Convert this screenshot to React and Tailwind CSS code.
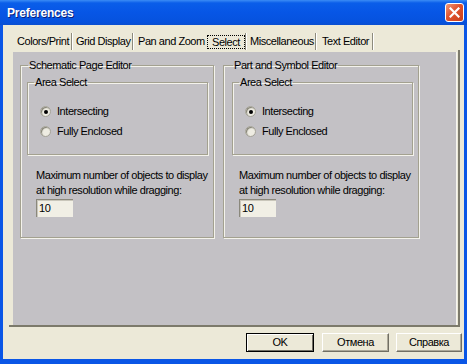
import React from "react";

function Radio({ checked }) {
  return (
    <span className="w-[11px] h-[11px] rounded-full bg-[#eeece2] border border-[#a4a297] shadow-[inset_1px_1px_1px_#7f7d70] flex items-center justify-center shrink-0">
      {checked && <span className="w-[4px] h-[4px] rounded-full bg-black" />}
    </span>
  );
}

function Btn({ children, def, className }) {
  return (
    <div
      className={
        "h-[19px] flex items-center justify-center bg-[#ece9d8] text-black " +
        (def
          ? "border border-black shadow-[inset_1px_1px_0_#fff,inset_-1px_-1px_0_#716f64]"
          : "border-t border-l border-t-white border-l-white border-r border-b border-r-[#716f64] border-b-[#716f64] shadow-[inset_-1px_-1px_0_#aca899]") +
        " " +
        className
      }
    >
      {children}
    </div>
  );
}

function Group({ title, titleMl, children, className }) {
  return (
    <fieldset
      className={
        "border border-[#a3a190] shadow-[1px_1px_0_#f4f3ec,inset_1px_1px_0_#f4f3ec] " +
        className
      }
    >
      <legend className={"px-[1px] leading-[13px] " + titleMl}>{title}</legend>
      {children}
    </fieldset>
  );
}

function EditorGroup({ title, titleMl, innerMl, className }) {
  return (
    <Group title={title} titleMl={titleMl} className={"h-[179px] " + className}>
      <div className={"mt-[4px] mr-[5px] " + innerMl}>
        <Group title="Area Select" titleMl="ml-[6px]" className="h-[79px]">
          <div className="pl-[12px] pt-[17px] flex flex-col gap-[9px]">
            <div className="flex items-center h-[11px]">
              <Radio checked />
              <span className="ml-[6px] leading-[13px]">Intersecting</span>
            </div>
            <div className="flex items-center h-[11px]">
              <Radio />
              <span className="ml-[6px] leading-[13px]">Fully Enclosed</span>
            </div>
          </div>
        </Group>
      </div>
      <div className="pl-[15px] mt-[13px] leading-[15px]">
        <div>Maximum number of objects to display</div>
        <div>at high resolution while dragging:</div>
        <div className="mt-[1px] w-[37px] h-[18px] bg-[#f1efe5] border-t border-l border-[#8a887c] shadow-[inset_1px_1px_0_#c9c6ba] flex items-center pl-[2px]">
          10
        </div>
      </div>
    </Group>
  );
}

export default function App() {
  const tabs = [
    { label: "Colors/Print", w: "w-[59px]", pl: "pl-[4px]" },
    { label: "Grid Display", w: "w-[61px]", pl: "pl-[4px]" },
    { label: "Pan and Zoom", w: "w-[72px]", pl: "pl-[5px]", noSep: true },
    { label: "Select", w: "w-[41px]", pl: "pl-[2px]", sel: true },
    { label: "Miscellaneous", w: "w-[70px]", pl: "pl-[4px]" },
    { label: "Text Editor", w: "w-[57px]", pl: "pl-[6px]" },
  ];
  return (
    <div className="w-[467px] h-[364px] flex flex-col bg-[#0a56e6] text-[11px] tracking-[-0.45px] text-black font-['Liberation_Sans',Arial,sans-serif] overflow-hidden">
      {/* Title bar */}
      <div className="h-[25px] shrink-0 flex items-center pl-[7px] pr-[3px] bg-[linear-gradient(to_bottom,#3b8cf5_0px,#0a5ee9_3px,#0756e6_12px,#0652de_22px,#0a4fd0_25px)]">
        <span className="text-white font-bold text-[12px] tracking-[-0.2px] [text-shadow:1px_1px_0_#0a1e7a]">
          Preferences
        </span>
        <div className="ml-auto w-[19px] h-[19px] rounded-[3px] border border-white bg-[linear-gradient(135deg,#f0997a,#e0532e_45%,#c9401c)] flex items-center justify-center">
          <svg width="11" height="11" viewBox="0 0 11 11">
            <path d="M1.5 1.5 L9.5 9.5 M9.5 1.5 L1.5 9.5" stroke="white" strokeWidth="2.2" strokeLinecap="square" />
          </svg>
        </div>
      </div>

      {/* Body */}
      <div className="flex-1 mx-[3px] mb-[5px] bg-[#ece9d8] flex flex-col">
        {/* Tabs */}
        <div className="mt-[8px] h-[17px] pl-[10px] flex">
          {tabs.map((t) => (
            <div
              key={t.label}
              className={
                "h-[17px] flex items-center " +
                t.w +
                " " +
                t.pl +
                (t.noSep ? "" : " border-r border-[#8d8b7d] shadow-[1px_0_0_#fff]")
              }
            >
              {t.sel ? (
                <span className="h-[14px] px-[4px] flex items-center border border-dotted border-black leading-[12px]">
                  {t.label}
                </span>
              ) : (
                <span className="leading-[13px]">{t.label}</span>
              )}
            </div>
          ))}
        </div>

        {/* Tab control */}
        <div className="ml-[6px] w-[451px] h-[277px] pl-[4px] pt-[2px] pr-[1px] border-r-2 border-b-2 border-[#7c7a6b] flex">
          <div className="flex-1 bg-[#c3c1c5] border-r border-[#f6f5f0] pl-[7px] pt-[7px] flex items-start">
            <EditorGroup
              title="Schematic Page Editor"
              titleMl="ml-[7px]"
              innerMl="ml-[6px]"
              className="w-[194px]"
            />
            <EditorGroup
              title="Part and Symbol Editor"
              titleMl="ml-[9px]"
              innerMl="ml-[8px]"
              className="w-[196px] ml-[9px]"
            />
          </div>
        </div>

        {/* Buttons */}
        <div className="mt-[6px] flex pl-[243px]">
          <Btn def className="w-[68px]">OK</Btn>
          <Btn className="w-[67px] ml-[8px]">Отмена</Btn>
          <Btn className="w-[66px] ml-[7px]">Справка</Btn>
        </div>
      </div>
    </div>
  );
}
